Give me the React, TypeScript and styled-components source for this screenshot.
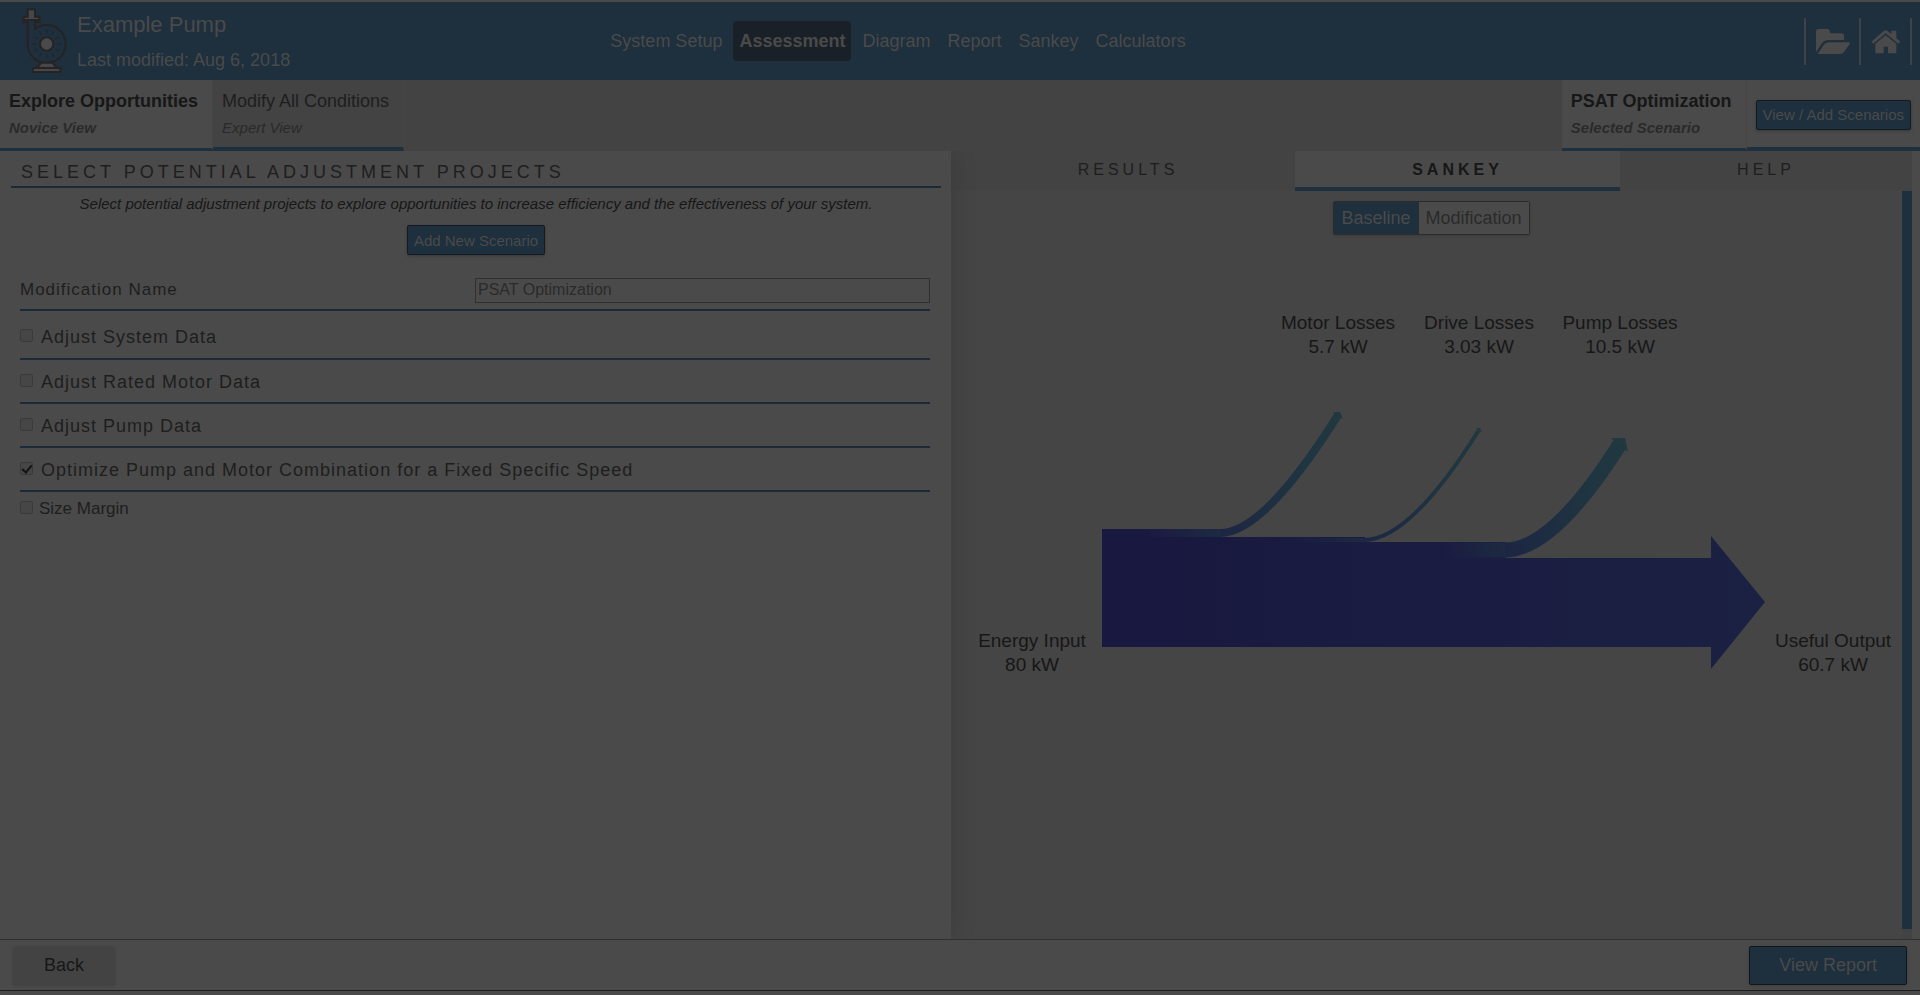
import React from 'react';
import styled, { createGlobalStyle, css } from 'styled-components';

const c = {
  surface: '#4a4a4a',
  panel: '#454545',
  muted: '#434343',
  blue: '#1e2f3d',
  rule: '#1b2a36',
  ink: '#171717',
  soft: '#1e1e1e',
  faint: '#2a2a2a',
  onBlue: '#4a4a4a',
};

const Global = createGlobalStyle`
  * { box-sizing: border-box; }
  body { margin: 0; background: ${c.surface}; color: ${c.ink}; font-family: "Liberation Sans", Arial, sans-serif; }
  button, input { font-family: inherit; }
  button { cursor: pointer; }
  h1, h2, p { margin: 0; font-weight: 400; }
`;

const Page = styled.div`
  display: flex;
  flex-direction: column;
  min-height: 100vh;
  padding: 2px 0 4px;
`;

const Header = styled.header`
  display: grid;
  grid-template-columns: 1fr auto 1fr auto;
  align-items: center;
  height: 78px;
  background: ${c.blue};
  color: ${c.onBlue};
`;

const Brand = styled.div`
  display: flex;
  gap: 8px;
  min-width: 0;
  padding-left: 21px;
`;

const BrandText = styled.div`
  display: flex;
  flex-direction: column;
  gap: 10px;
  padding-top: 5px;
`;

const Title = styled.h1`
  font-size: 22px;
  line-height: 26px;
`;

const Modified = styled.p`
  font-size: 18px;
  line-height: 24px;
`;

const Nav = styled.nav`
  display: flex;
  gap: 5px;
`;

const NavLink = styled.a<{ $active?: boolean }>`
  padding: 0 6px;
  border-radius: 4px;
  color: ${c.onBlue};
  font-size: 18px;
  line-height: 40px;
  text-decoration: none;
  ${(p) => p.$active && css`background: #192027; font-weight: 700;`}
`;

const Spacer = styled.div`
  flex: 1 1 0;
`;

const Actions = styled.div`
  display: grid;
  grid-template-columns: 55px 53px;
  padding: 0 8px;
`;

const IconButton = styled.button`
  display: flex;
  align-items: center;
  justify-content: center;
  height: 47px;
  padding: 0;
  border: 0;
  border-left: 2px solid #404345;
  background: none;
  color: ${c.onBlue};
  &:last-child { border-right: 2px solid #404345; }
`;

const SubHeader = styled.div`
  display: flex;
  height: 71px;
  background: ${c.muted};
`;

const ViewTab = styled.button<{ $active?: boolean }>`
  display: flex;
  flex-direction: column;
  gap: 5px;
  padding: 9px 14px 0 9px;
  border: 0;
  border-right: 1px solid ${c.panel};
  border-bottom: ${(p) => (p.$active ? 3 : 4)}px solid ${c.blue};
  background: ${(p) => (p.$active ? c.surface : c.muted)};
  color: ${(p) => (p.$active ? c.ink : c.soft)};
  font-size: 18px;
  font-weight: ${(p) => (p.$active ? 700 : 400)};
  line-height: 24px;
  text-align: left;
`;

const ViewNote = styled.span`
  color: ${c.faint};
  font-size: 15px;
  font-style: italic;
  line-height: 20px;
`;

const ScenarioActions = styled.div`
  display: flex;
  align-items: center;
  padding: 2px 9px 0 9px;
  border-bottom: 4px solid ${c.blue};
  background: ${c.surface};
`;

const ActionButton = styled.button`
  height: 30px;
  padding: 0 6px;
  border: 1px solid #141a1f;
  border-radius: 2px;
  background: ${c.blue};
  box-shadow: 0 1px 3px rgba(0, 0, 0, 0.25);
  color: ${c.onBlue};
  font-size: 15px;
`;

const Main = styled.main`
  display: grid;
  flex: 1 1 auto;
  grid-template-columns: minmax(0, 951fr) minmax(0, 961fr);
  padding-right: 8px;
`;

const Projects = styled.section`
  position: relative;
  padding: 0 10px 0 11px;
  background: ${c.surface};
  box-shadow: 2px 0 24px rgba(0, 0, 0, 0.12);
  clip-path: inset(0 -30px 0 0);
`;

const SectionTitle = styled.h2`
  padding: 8px 10px 0;
  border-bottom: 2px solid ${c.rule};
  color: ${c.soft};
  font-size: 18px;
  letter-spacing: 4px;
  line-height: 27px;
`;

const Intro = styled.p`
  padding-top: 6px;
  font-size: 15px;
  font-style: italic;
  line-height: 20px;
  text-align: center;
`;

const CenterRow = styled.div`
  display: flex;
  justify-content: center;
  padding: 11px 0 22px;
`;

const Form = styled.form`
  padding: 0 11px 0 9px;
`;

const NameRow = styled.div`
  display: grid;
  grid-template-columns: 1fr 1fr;
  align-items: center;
  padding-bottom: 6px;
  border-bottom: 2px solid ${c.rule};
  color: ${c.soft};
  font-size: 17px;
  letter-spacing: 1px;
  line-height: 26px;
`;

const NameInput = styled.input`
  width: 100%;
  height: 25px;
  padding: 0 2px;
  border: 1px solid #303030;
  background: ${c.surface};
  color: ${c.faint};
  font-size: 16px;
`;

const CheckRow = styled.label<{ $tall?: boolean }>`
  display: flex;
  align-items: center;
  gap: 8px;
  height: ${(p) => (p.$tall ? 49 : 44)}px;
  padding-top: ${(p) => (p.$tall ? 6 : 2)}px;
  border-bottom: 2px solid ${c.rule};
  color: ${c.soft};
  font-size: 18px;
  letter-spacing: 1px;
`;

const SubCheckRow = styled.label`
  display: flex;
  align-items: center;
  gap: 6px;
  height: 34px;
  color: ${c.soft};
  font-size: 17px;
`;

const Check = styled.input`
  appearance: none;
  display: grid;
  place-items: center;
  width: 13px;
  height: 13px;
  margin: 0 0 4px;
  border: 1px solid #3a3a3a;
  border-radius: 2px;
  background: #464646;
  &:checked::after {
    content: "";
    width: 4px;
    height: 8px;
    margin-bottom: 2px;
    border: solid #141414;
    border-width: 0 2px 2px 0;
    transform: rotate(40deg);
  }
`;

const Results = styled.section`
  display: flex;
  flex-direction: column;
  background: ${c.panel};
`;

const Tabs = styled.div`
  display: flex;
  height: 40px;
  padding-left: 10px;
  background: ${c.muted};
`;

const Tab = styled.button<{ $grow: number; $active?: boolean }>`
  flex: ${(p) => p.$grow} 1 0;
  padding: 0 0 2px;
  border: 0;
  background: ${c.muted};
  color: ${c.soft};
  font-size: 16px;
  letter-spacing: 4px;
  ${(p) => p.$active && css`
    padding: 2px 0 0;
    border-bottom: 4px solid ${c.blue};
    background: ${c.surface};
    color: ${c.ink};
    font-weight: 700;
  `}
`;

const ChartRow = styled.div`
  display: flex;
  flex: 1 1 auto;
`;

const ChartArea = styled.div`
  display: flex;
  flex: 1 1 auto;
  flex-direction: column;
  align-items: center;
  min-width: 0;
  padding-top: 10px;
`;

const ScrollTrack = styled.div`
  display: flex;
  flex: 0 0 10px;
  padding-bottom: 10px;
  background: ${c.muted};
`;

const ScrollThumb = styled.div`
  flex: 1;
  background: ${c.blue};
`;

const Toggle = styled.div`
  display: flex;
  height: 34px;
  margin-left: 10px;
  border: 1px solid #2c2c2c;
  border-radius: 2px;
  box-shadow: 0 1px 3px rgba(0, 0, 0, 0.15);
`;

const ToggleButton = styled.button<{ $active?: boolean }>`
  padding: 0 7px;
  border: 0;
  background: ${(p) => (p.$active ? c.blue : c.surface)};
  color: ${(p) => (p.$active ? c.onBlue : c.faint)};
  font-size: 18px;
  & + & { border-left: 1px solid #2c2c2c; }
`;

const Chart = styled.svg`
  display: block;
  width: 100%;
  height: auto;
`;

const ChartLabel = styled.text`
  fill: ${c.ink};
  font-size: 19px;
  text-anchor: middle;
`;

const Footer = styled.footer`
  display: flex;
  align-items: center;
  justify-content: space-between;
  height: 52px;
  padding: 0 13px;
  border-top: 1px solid #303030;
  border-bottom: 1px solid #1d1d1d;
  background: ${c.surface};
`;

const FooterButton = styled.button<{ $primary?: boolean }>`
  height: 39px;
  padding: 0 ${(p) => (p.$primary ? 29 : 30)}px;
  border: 1px solid ${(p) => (p.$primary ? '#111519' : c.muted)};
  border-radius: 2px;
  background: ${(p) => (p.$primary ? c.blue : c.muted)};
  box-shadow: 0 1px 3px rgba(0, 0, 0, 0.12);
  color: ${(p) => (p.$primary ? c.onBlue : c.ink)};
  font-size: 18px;
`;

const rays = Array.from({ length: 12 }, (_, i) => i * 30);

const PumpLogo = () => (
  <svg width="48" height="68" viewBox="62 22 144 204" fill="none" stroke="#252324" strokeWidth="6" aria-hidden="true">
    <path d="M69 61V68H82V133A57 57 0 1 0 104 88V68H118V61" />
    <path d="M82 29H104V51H117V61H70V51H82Z" fill="#474747" />
    <circle cx="139" cy="133" r="20" fill="#4a4a4a" />
    {rays.map((a) => (
      <path key={a} d="M139 103V89" strokeWidth="3" transform={`rotate(${a} 139 133)`} />
    ))}
    <path d="M122 189H157Q161 199 172 205H106Q118 199 122 189Z" fill="#474747" />
    <path d="M98 205H180V217H98Z" fill="#474747" />
  </svg>
);

const FolderIcon = () => (
  <svg width="36" height="27" viewBox="822 77 108 81" fill="currentColor" aria-hidden="true">
    <path d="M825 150V86Q826 80 832 80H860Q866 80 868 93H903Q909 94 909 100V113H864Q850 113 842 124Z" />
    <path d="M830 155L848 128Q853 120 863 120H924Q929 121 926 125L909 149Q905 155 897 155Z" />
  </svg>
);

const HomeIcon = () => (
  <svg width="30" height="25" viewBox="992 83 90 75" fill="currentColor" aria-hidden="true">
    <path d="M993 121L1030 89Q1036 84 1042 89L1053 98V88H1068V111L1080 121L1074 127L1036 96L999 127Z" />
    <path d="M1005 127L1036 102L1068 127V156H1043V136H1030V156H1005Z" />
  </svg>
);

const labels = [
  { x: 1338, y: 329, name: 'Motor Losses', value: '5.7 kW' },
  { x: 1479, y: 329, name: 'Drive Losses', value: '3.03 kW' },
  { x: 1620, y: 329, name: 'Pump Losses', value: '10.5 kW' },
  { x: 1032, y: 647, name: 'Energy Input', value: '80 kW' },
  { x: 1833, y: 647, name: 'Useful Output', value: '60.7 kW' },
];

const losses = [
  { id: 'motor', from: 1150, bend: 1221, y: 533, w: 8, curve: 'M1220 533Q1264 533 1338 415', head: '1333,412 1340,412 1343,419', end: 1342 },
  { id: 'drive', from: 1295, bend: 1365, y: 540, w: 4, curve: 'M1364 540Q1410 540 1479 430', head: '1476,428 1480,428 1482,432', end: 1482 },
  { id: 'pump', from: 1440, bend: 1506, y: 550, w: 15, curve: 'M1505 550Q1553 550 1620 444', head: '1611,438 1625,438 1628,452', end: 1628 },
];

const Sankey = () => (
  <Chart viewBox="951 235 951 694" role="img" aria-label="Sankey diagram of pump energy use">
    <defs>
      <linearGradient id="bar">
        <stop offset="0" stopColor="#191840" />
        <stop offset="1" stopColor="#1b2142" />
      </linearGradient>
      {losses.map((l) => (
        <React.Fragment key={l.id}>
          <linearGradient id={`${l.id}-flat`} gradientUnits="userSpaceOnUse" x1={l.from} x2={l.bend} y1="0" y2="0">
            <stop offset="0" stopColor="#1a1b41" />
            <stop offset="1" stopColor="#1d2a41" />
          </linearGradient>
          <linearGradient id={`${l.id}-curve`} gradientUnits="userSpaceOnUse" x1={l.bend} x2={l.end} y1="0" y2="0">
            <stop offset="0" stopColor="#1c2643" />
            <stop offset="0.7" stopColor="#1f3541" />
            <stop offset="1" stopColor="#20383f" />
          </linearGradient>
        </React.Fragment>
      ))}
    </defs>
    <path d="M1102 529H1221V537H1365V542H1506V558H1711V536L1765 602L1711 669V647H1102Z" fill="url(#bar)" />
    {losses.map((l) => (
      <g key={l.id}>
        <rect x={l.from} y={l.y - l.w / 2} width={l.bend - l.from} height={l.w} fill={`url(#${l.id}-flat)`} />
        <path d={l.curve} fill="none" stroke={`url(#${l.id}-curve)`} strokeWidth={l.w} />
        <polygon points={l.head} fill="#20383f" />
      </g>
    ))}
    {labels.map((l) => (
      <ChartLabel key={l.name} x={l.x} y={l.y}>
        {l.name}
        <tspan x={l.x} dy="24">{l.value}</tspan>
      </ChartLabel>
    ))}
  </Chart>
);

const navItems = ['System Setup', 'Assessment', 'Diagram', 'Report', 'Sankey', 'Calculators'];

const projects = [
  { name: 'Adjust System Data', on: false },
  { name: 'Adjust Rated Motor Data', on: false },
  { name: 'Adjust Pump Data', on: false },
  { name: 'Optimize Pump and Motor Combination for a Fixed Specific Speed', on: true },
];

export default function App() {
  return (
    <Page>
      <Global />
      <Header>
        <Brand>
          <PumpLogo />
          <BrandText>
            <Title>Example Pump</Title>
            <Modified>Last modified: Aug 6, 2018</Modified>
          </BrandText>
        </Brand>
        <Nav>
          {navItems.map((n) => (
            <NavLink key={n} href="#" $active={n === 'Assessment'}>{n}</NavLink>
          ))}
        </Nav>
        <Spacer />
        <Actions>
          <IconButton aria-label="Open folder"><FolderIcon /></IconButton>
          <IconButton aria-label="Home"><HomeIcon /></IconButton>
        </Actions>
      </Header>
      <SubHeader>
        <ViewTab $active>Explore Opportunities<ViewNote>Novice View</ViewNote></ViewTab>
        <ViewTab>Modify All Conditions<ViewNote>Expert View</ViewNote></ViewTab>
        <Spacer />
        <ViewTab $active>PSAT Optimization<ViewNote>Selected Scenario</ViewNote></ViewTab>
        <ScenarioActions><ActionButton>View / Add Scenarios</ActionButton></ScenarioActions>
      </SubHeader>
      <Main>
        <Projects>
          <SectionTitle>SELECT POTENTIAL ADJUSTMENT PROJECTS</SectionTitle>
          <Intro>Select potential adjustment projects to explore opportunities to increase efficiency and the effectiveness of your system.</Intro>
          <CenterRow><ActionButton>Add New Scenario</ActionButton></CenterRow>
          <Form>
            <NameRow>
              <label htmlFor="modification-name">Modification Name</label>
              <NameInput id="modification-name" defaultValue="PSAT Optimization" />
            </NameRow>
            {projects.map((p, i) => (
              <CheckRow key={p.name} $tall={i === 0}>
                <Check type="checkbox" defaultChecked={p.on} />
                {p.name}
              </CheckRow>
            ))}
            <SubCheckRow><Check type="checkbox" />Size Margin</SubCheckRow>
          </Form>
        </Projects>
        <Results>
          <Tabs>
            <Tab $grow={334}>RESULTS</Tab>
            <Tab $grow={325} $active>SANKEY</Tab>
            <Tab $grow={292}>HELP</Tab>
          </Tabs>
          <ChartRow>
            <ChartArea>
              <Toggle>
                <ToggleButton $active>Baseline</ToggleButton>
                <ToggleButton>Modification</ToggleButton>
              </Toggle>
              <Sankey />
            </ChartArea>
            <ScrollTrack><ScrollThumb /></ScrollTrack>
          </ChartRow>
        </Results>
      </Main>
      <Footer>
        <FooterButton>Back</FooterButton>
        <FooterButton $primary>View Report</FooterButton>
      </Footer>
    </Page>
  );
}
